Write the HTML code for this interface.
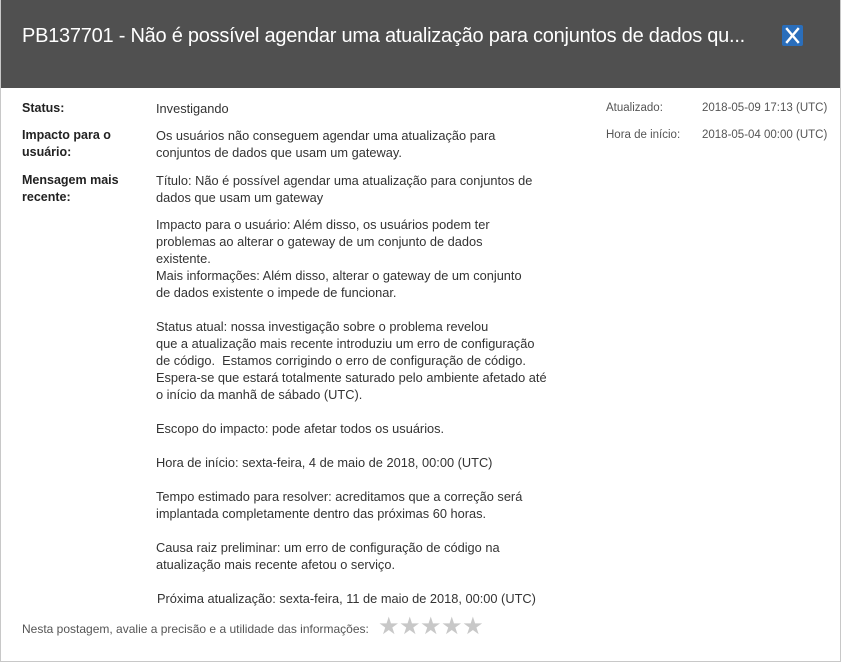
<!DOCTYPE html>
<html><head><meta charset="utf-8"><style>
*{margin:0;padding:0;box-sizing:border-box}
body{width:841px;height:662px;background:#fff;font-family:"Liberation Sans",sans-serif;font-size:12.8px;color:#333;position:relative;overflow:hidden}
.frame{position:absolute;left:0;top:0;width:841px;height:662px;border:1px solid #c8c8c8;border-top:none}
.hdr{position:absolute;left:0;top:0;width:841px;height:88px;background:#505050}
.title{position:absolute;left:22px;top:25px;font-size:20px;color:#fff;white-space:nowrap;letter-spacing:-0.25px}
.close{position:absolute;left:782px;top:25px;width:21px;height:21px;background:#2a6ebb;border-radius:2px}
.t{position:absolute;white-space:nowrap;line-height:17px}
.b{font-weight:bold;color:#222;font-size:12.5px}
.s{color:#555;font-size:11.5px}
.sp{display:block;height:10px}
</style></head><body>
<div class="hdr"></div>
<div class="title">PB137701 - Não é possível agendar uma atualização para conjuntos de dados qu...</div>
<div class="close"><svg width="21" height="21" viewBox="0 0 21 21"><path d="M5 4 L16 17 M16 4 L5 17" stroke="#fff" stroke-width="2.4" stroke-linecap="square"/></svg></div>

<div class="t b" style="left:22px;top:100px">Status:</div>
<div class="t" style="left:156px;top:100px">Investigando</div>
<div class="t b" style="left:22px;top:127px">Impacto para o<br>usuário:</div>
<div class="t" style="left:156px;top:127px">Os usuários não conseguem agendar uma atualização para<br>conjuntos de dados que usam um gateway.</div>
<div class="t b" style="left:22px;top:172px">Mensagem mais<br>recente:</div>
<div class="t" style="left:156px;top:172px">Título: Não é possível agendar uma atualização para conjuntos de<br>dados que usam um gateway<span class="sp"></span>Impacto para o usuário: Além disso, os usuários podem ter<br>problemas ao alterar o gateway de um conjunto de dados<br>existente.<br>Mais informações: Além disso, alterar o gateway de um conjunto<br>de dados existente o impede de funcionar.<br><br>Status atual: nossa investigação sobre o problema revelou<br>que a atualização mais recente introduziu um erro de configuração<br>de código.&nbsp; Estamos corrigindo o erro de configuração de código.<br>Espera-se que estará totalmente saturado pelo ambiente afetado até<br>o início da manhã de sábado (UTC).<br><br>Escopo do impacto: pode afetar todos os usuários.<br><br>Hora de início: sexta-feira, 4 de maio de 2018, 00:00 (UTC)<br><br>Tempo estimado para resolver: acreditamos que a correção será<br>implantada completamente dentro das próximas 60 horas.<br><br>Causa raiz preliminar: um erro de configuração de código na<br>atualização mais recente afetou o serviço.</div>
<div class="t" style="left:157px;top:590px">Próxima atualização: sexta-feira, 11 de maio de 2018, 00:00 (UTC)</div>

<div class="t s" style="left:606px;top:100px">Atualizado:</div>
<div class="t s" style="left:702px;top:100px">2018-05-09 17:13 (UTC)</div>
<div class="t s" style="left:606px;top:127px">Hora de início:</div>
<div class="t s" style="left:702px;top:127px">2018-05-04 00:00 (UTC)</div>

<div class="t s" style="left:22px;top:621px;font-size:12px">Nesta postagem, avalie a precisão e a utilidade das informações:</div>
<div class="t" style="left:378px;top:614px;font-size:24px;color:#c8c8c8;letter-spacing:-0.5px;line-height:26px">★★★★★</div>
<div class="frame"></div>
</body></html>
